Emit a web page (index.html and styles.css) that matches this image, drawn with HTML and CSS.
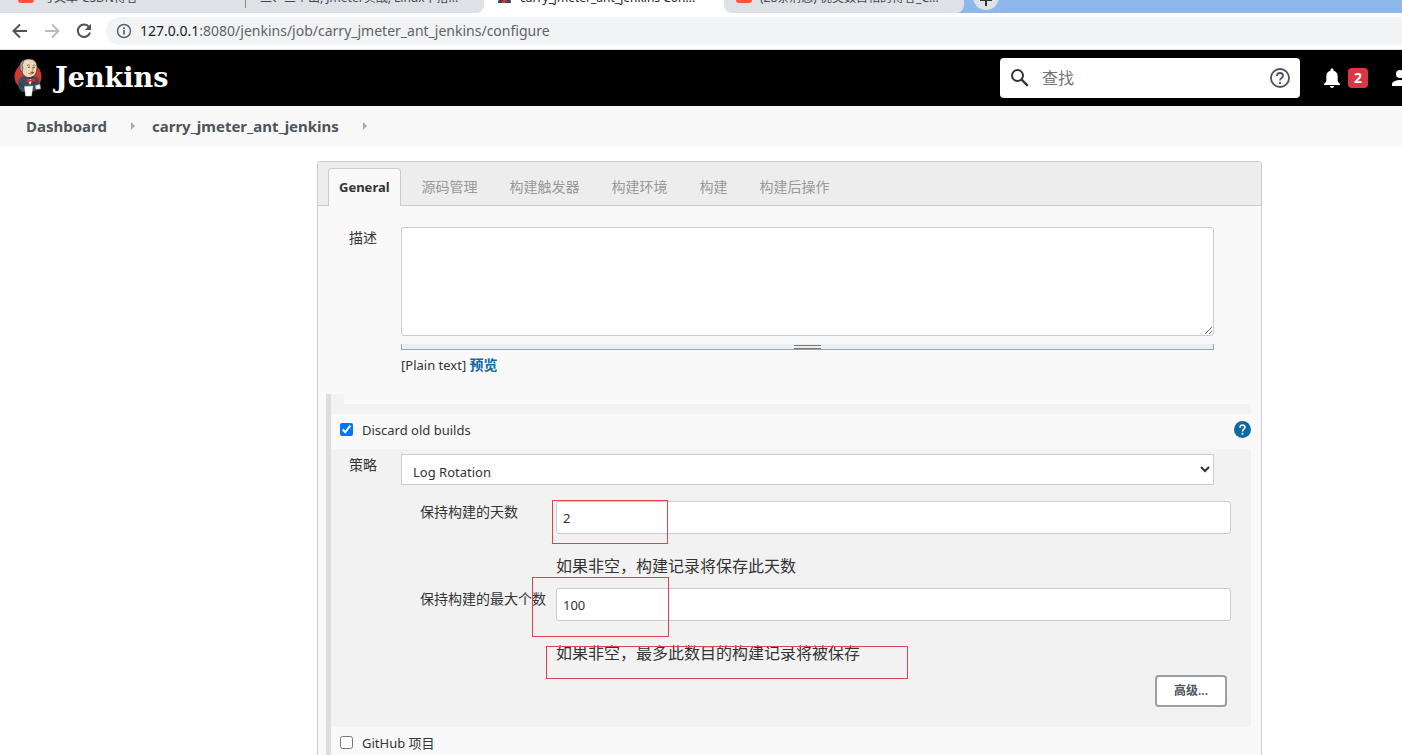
FILE: index.html
```html
<!DOCTYPE html>
<html lang="zh-CN">
<head>
<meta charset="utf-8">
<title>carry_jmeter_ant_jenkins Config [Jenkins]</title>
<link rel="stylesheet" href="styles.css">
</head>
<body>
<div class="browser">
  <div class="tab-strip">
    <div class="tab tab-first"><span class="tab-icon"></span><span class="tab-title">写文章-CSDN博客</span></div>
    <div class="tab tab-last"><span class="tab-title tab-title-plain">二、三个山, Jmeter实战, Linux下搭...</span></div>
    <div class="tab tab-active">
      <svg class="tab-butler" viewBox="0 0 16 16" aria-hidden="true"><path d="M2 16c0-4 2-6 5-7l4 1c3 1 4 3 4 6z" fill="#39434d"/><path d="M7 11l4 3-2 2H6z" fill="#d33833"/><circle cx="8" cy="6" r="4" fill="#f0d6b7"/></svg>
      <span class="tab-title">carry_jmeter_ant_jenkins Con...</span>
    </div>
    <div class="tab tab-only"><span class="tab-icon"></span><span class="tab-title">(28条消息) 优美数目相的博客_C...</span></div>
    <button class="new-tab" type="button" aria-label="New tab"><svg viewBox="0 0 12 12"><path d="M6 0v12M0 6h12" stroke="#333" stroke-width="2"/></svg></button>
  </div>
  <div class="toolbar">
    <button class="nav-button" type="button" aria-label="Back"><svg viewBox="0 0 16 16"><path d="M15 8H2M8 1.500L1.500 8L8 14.500" fill="none" stroke="#50545a" stroke-width="2"/></svg></button>
    <button class="nav-button" type="button" aria-label="Forward"><svg viewBox="0 0 16 16"><path d="M1 8h13M8 1.500L14.500 8L8 14.500" fill="none" stroke="#b9bbbe" stroke-width="2"/></svg></button>
    <button class="nav-button" type="button" aria-label="Reload"><svg viewBox="0 0 16 16"><path d="M13.300 4.500A6.200 6.200 0 1 0 14 9.500" fill="none" stroke="#50545a" stroke-width="2"/><path d="M15 0.800V7H8.800z" fill="#50545a"/></svg></button>
    <div class="address">
      <svg class="info" viewBox="0 0 16 16" aria-hidden="true"><circle cx="8" cy="8" r="6.500" fill="none" stroke="#5f6368" stroke-width="1.500"/><path d="M7.100 7h1.800v4.500H7.100zM7.100 4.200h1.800v1.700H7.100z" fill="#5f6368"/></svg>
      <span class="url"><b>127.0.0.1</b>:8080/jenkins/job/carry_jmeter_ant_jenkins/configure</span>
    </div>
  </div>
</div>

<header class="header">
  <a class="brand" href="#">
    <svg class="butler" viewBox="0 0 28 40" aria-hidden="true">
      <ellipse cx="14" cy="18.500" rx="13.500" ry="13.500" fill="#d33833"/>
      <path d="M6 20c-2 2-2.500 7-1 10 1 2.500 2 3 4 4l12-2c3-1 4-3 4.500-5l-1-7-6-2H9z" fill="#335061"/>
      <path d="M15 20l7-1 2 9-3 5h-6z" fill="#39474f"/>
      <path d="M13 21l3 6 3-6z" fill="#f4f4f4"/>
      <path d="M6.500 8C7.500 2.500 11 1 15 1c5 0 8 3 8 8 0 6-2 9.500-7 10.500-4 .5-7-2-8-5.500z" fill="#f0d6b7" stroke="#231f20" stroke-width=".7"/>
      <path d="M6.500 13C5 8 6 3.500 10 2c-1 2-1 4-2 5l1 3-1 4z" fill="#a7a39b" stroke="#453d38" stroke-width=".6"/>
      <path d="M13 7.500q2-1.500 3 0M18.500 7.500q2-1.300 3 0M18 9q2 2 .5 3.500M14.500 15.500q3 1.500 5.500-.8" fill="none" stroke="#6d4b3b" stroke-width=".7"/>
      <circle cx="15" cy="9.300" r=".7" fill="#231f20"/><circle cx="20" cy="9.300" r=".7" fill="#231f20"/>
      <path d="M16 14q2.500-1.300 4.500.2l-2.500 1z" fill="#6d4b3b"/>
      <path d="M11.500 20l5 2 4.500-2.500 1 4.500-5.500-1-4 2z" fill="#d33833" stroke="#7c1d1b" stroke-width=".5"/>
      <path d="M10.500 28.500l8.500-.5L17.500 38h-6z" fill="#fff" stroke="#ccd0d2" stroke-width=".5"/>
      <path d="M21 27.500l5-1.500.8 5-5 .5z" fill="#eee" stroke="#6d6b6d" stroke-width=".5"/>
      <path d="M6 25l4 5" stroke="#203541" stroke-width="1"/>
    </svg>
    <span>Jenkins</span>
  </a>
  <div class="header-right">
    <label class="search">
      <svg class="search-icon" viewBox="0 0 20 20" aria-hidden="true"><circle cx="7.500" cy="7.500" r="5.500" fill="none" stroke="#333" stroke-width="2"/><path d="M11.500 11.500l6.300 6.300" stroke="#333" stroke-width="2.400"/></svg>
      <input type="search" placeholder="查找" aria-label="查找">
      <svg class="search-help" viewBox="0 0 20 20" aria-hidden="true"><circle cx="10" cy="10" r="9" fill="none" stroke="#4d545d" stroke-width="1.800"/><path d="M7 8c0-1.800 1.200-3 3-3s3 1.200 3 2.800c0 2-3 2.300-3 4.700" fill="none" stroke="#4d545d" stroke-width="1.800"/><path d="M9 14h2v2H9z" fill="#4d545d"/></svg>
    </label>
    <a class="alerts" href="#" aria-label="2 notifications">
      <svg viewBox="0 0 16 20" aria-hidden="true"><path d="M8 0.500c.9 0 1.500.6 1.500 1.500v.7c2.800.7 4.200 3 4.200 5.800v5L16 16v1H0v-1l2.300-2.500v-5c0-2.800 1.400-5.100 4.200-5.800V2c0-.9.600-1.500 1.500-1.500zM6 18h4c0 1.100-.9 2-2 2s-2-.9-2-2z" fill="#fff"/></svg>
      <span class="badge">2</span>
    </a>
    <a class="user" href="#" aria-label="User"><svg viewBox="0 0 16 16" aria-hidden="true"><circle cx="8" cy="4" r="4" fill="#fff"/><path d="M0 16v-2c0-2.700 5.300-4 8-4s8 1.300 8 4v2z" fill="#fff"/></svg></a>
  </div>
</header>

<nav class="breadcrumbs">
  <a href="#">Dashboard</a><i class="arrow"></i><a href="#">carry_jmeter_ant_jenkins</a><i class="arrow"></i>
</nav>

<main class="page">
  <form class="config">
    <div class="config-tabs">
      <a class="config-tab config-tab-active" href="#">General</a>
      <a class="config-tab" href="#">源码管理</a>
      <a class="config-tab" href="#">构建触发器</a>
      <a class="config-tab" href="#">构建环境</a>
      <a class="config-tab" href="#">构建</a>
      <a class="config-tab" href="#">构建后操作</a>
    </div>

    <div class="row description">
      <label for="description">描述</label>
      <div class="control">
        <textarea id="description"></textarea>
        <div class="resizer"><span></span></div>
        <p class="preview">[Plain text] <a href="#">预览</a></p>
      </div>
    </div>

    <section class="options">
      <div class="spacer"></div>
      <div class="option">
        <input type="checkbox" id="discard" checked><label for="discard">Discard old builds</label>
        <a class="help" href="#" aria-label="Help"><svg viewBox="0 0 16 16" aria-hidden="true"><circle cx="8" cy="8" r="8" fill="#0b6aa2"/><path d="M5.700 6.300C5.700 4.700 6.700 3.700 8 3.700s2.300.9 2.300 2.200C10.300 7.500 8 7.800 8 9.800" fill="none" stroke="#fff" stroke-width="1.500"/><path d="M7.200 11.200h1.600v1.600H7.200z" fill="#fff"/></svg></a>
      </div>
      <div class="option-body">
        <div class="row strategy">
          <label for="strategy">策略</label>
          <select id="strategy"><option>Log Rotation</option></select>
        </div>
        <div class="row limit">
          <label for="days">保持构建的天数</label>
          <div class="control">
            <input type="text" id="days" value="2">
            <p class="hint">如果非空，构建记录将保存此天数</p>
            <span class="mark mark-days"></span>
          </div>
        </div>
        <div class="row limit">
          <label for="builds">保持构建的最大个数</label>
          <div class="control">
            <input type="text" id="builds" value="100">
            <p class="hint">如果非空，最多此数目的构建记录将被保存</p>
            <span class="mark mark-builds"></span>
            <span class="mark mark-hint"></span>
          </div>
        </div>
        <div class="actions"><button type="button">高级...</button></div>
      </div>
      <div class="option">
        <input type="checkbox" id="github"><label for="github">GitHub 项目</label>
      </div>
    </section>
  </form>
</main>
</body>
</html>
```
FILE: styles.css
```css
* { box-sizing: border-box; }

html { overflow: hidden; }

body {
  margin: 0;
  background: #fff;
  color: #333;
  font: 14px/20px "Noto Sans", "Noto Sans CJK SC", sans-serif;
}

a { color: inherit; text-decoration: none; }
p { margin: 0; }
svg { display: block; }
button { font: inherit; cursor: pointer; }

/* Browser chrome */
.browser { border-bottom: 1px solid #dadce0; }

.tab-strip {
  display: flex;
  align-items: flex-end;
  height: 13px;
  overflow: hidden;
  background: linear-gradient(90deg, #dee1e6 0 470px, #fff 470px 740px, #8fb8ea 740px);
}

.tab {
  display: flex;
  align-items: center;
  gap: 8px;
  flex: 0 0 240px;
  min-width: 0;
  height: 34px;
  padding: 0 24px 0 12px;
  background: #dee1e6;
  color: #45484c;
  font-size: 12px;
}

.tab-first { flex-basis: 245px; padding-left: 18px; }
.tab-last { flex-basis: 239px; padding-left: 0; border-radius: 0 0 8px 0; }
.tab-active { background: #fff; color: #222; }
.tab-only { border-radius: 0 0 8px 8px; }

.tab-title { flex: 1; min-width: 0; overflow: hidden; white-space: nowrap; padding-top: 3px; }
.tab-title-plain { border-left: 1px solid #888; padding-left: 14px; }
.tab-icon { flex: none; width: 16px; height: 16px; border-radius: 3px; background: #fff; border: 4px solid #fc5531; margin-bottom: 2px; }
.tab-butler { flex: none; width: 16px; height: 16px; margin-bottom: 2px; }

.new-tab {
  display: flex;
  align-items: center;
  justify-content: center;
  width: 26px;
  height: 26px;
  margin: 0 0 3px 9px;
  padding: 0;
  border: 0;
  border-radius: 13px;
  background: #dee1e6;
}

.new-tab svg { width: 12px; height: 12px; margin-top: 6px; }

.toolbar {
  display: flex;
  align-items: center;
  gap: 16px;
  height: 36px;
  padding-left: 12px;
  background: #fff;
}

.nav-button { width: 16px; height: 16px; padding: 0; border: 0; background: none; }
.nav-button svg { width: 16px; height: 16px; }

.address {
  display: flex;
  align-items: center;
  gap: 8px;
  flex: 1;
  height: 28px;
  margin-left: -2px;
  padding-left: 10px;
  border-radius: 14px 0 0 14px;
  background: #f1f3f4;
}

.info { width: 16px; height: 16px; }
.url { color: #5f6368; font-size: 14px; white-space: nowrap; }
.url b { color: #202124; font-weight: 400; }

/* Jenkins header */
.header {
  display: flex;
  align-items: center;
  justify-content: space-between;
  height: 56px;
  padding-left: 14px;
  overflow: hidden;
  background: #000;
}

.brand {
  display: flex;
  align-items: center;
  gap: 13px;
  color: #fff;
  font: bold 27px/40px "DejaVu Serif", serif;
}

.butler { width: 28px; height: 40px; }
.header-right { display: flex; align-items: center; }

.search {
  display: flex;
  align-items: center;
  width: 300px;
  height: 40px;
  padding: 0 10px;
  border-radius: 4px;
  background: #fff;
}

.search-icon, .search-help { flex: none; width: 20px; height: 20px; }

.search input {
  flex: 1;
  min-width: 0;
  padding: 0 12px;
  border: 0;
  outline: 0;
  background: none;
  font: inherit;
  font-size: 16px;
}

.search input::placeholder { color: #757575; }

.alerts { display: flex; align-items: center; gap: 8px; margin: 0 24px; }
.alerts svg { width: 16px; height: 20px; }

.badge {
  width: 20px;
  height: 20px;
  border-radius: 4px;
  background: #dc3545;
  color: #fff;
  font-size: 14px;
  font-weight: 700;
  text-align: center;
}

.user { width: 10px; }
.user svg { width: 16px; height: 16px; }

.breadcrumbs {
  display: flex;
  align-items: center;
  height: 40px;
  padding-left: 26px;
  background: #f8f8f8;
  color: #4d545d;
  font-size: 15px;
  font-weight: 700;
}

.arrow {
  margin: 0 17px 0 24px;
  border: 4px solid transparent;
  border-left: 4px solid #aaa;
  border-right-width: 0;
}

/* Configuration form */
.page { padding: 15px 140px 0 317px; }

.config {
  border: 1px solid #ccc;
  border-radius: 3px 3px 0 0;
  background: #f9f9f9;
}

.config-tabs {
  display: flex;
  align-items: flex-end;
  height: 44px;
  padding-left: 10px;
  border-bottom: 1px solid #ccc;
  background: #ededed;
}

.config-tab {
  height: 37px;
  padding: 8px 10px 0;
  border: 1px solid transparent;
  border-bottom: 0;
  margin: 0 10px 0 0;
  color: #999;
}

.config-tab-active {
  height: 38px;
  margin: 0 10px -1px 0;
  border-color: #ccc;
  border-radius: 4px 4px 0 0;
  background: #f9f9f9;
  color: #333;
  font-size: 13px;
  font-weight: 700;
}

.row { display: grid; grid-template-columns: 52px 1fr; }
.row label { padding-top: 1px; }
.description { padding: 21px 47px 19px 31px; }

textarea {
  display: block;
  width: 100%;
  height: 109px;
  border: 1px solid #ccc;
  border-radius: 3px;
  outline: 0;
  resize: vertical;
}

.resizer {
  display: flex;
  justify-content: center;
  height: 6px;
  margin-top: 8px;
  border: 1px solid #98a5af;
  border-top: 0;
  background: #eceff1;
}

.resizer span { width: 27px; height: 4px; margin-top: 1px; border: 1px solid #777; border-width: 1px 0; }
.preview { padding-top: 5px; font-size: 13px; }
.preview a { color: #0b6aa2; font-weight: 700; font-size: 14px; }

.options {
  margin: 0 10px 0 8px;
  border-left: 5px solid #ddd;
}

.spacer {
  height: 20px;
  border-left: 13px solid #f2f2f2;
  background: linear-gradient(#f9f9f9 10px, #f2f2f2 10px);
}

.option { display: flex; align-items: center; height: 35px; padding: 0 0 5px 9px; font-size: 13px; }
.option input { width: 13px; height: 13px; margin: 0 9px 0 0; }
.option label { padding-top: 2px; }
.option .help { margin-left: auto; }
.help svg { width: 17px; height: 17px; }

.option-body { padding: 5px 0 20px; background: #f2f2f2; }
.strategy { padding: 0 37px 0 18px; }

select {
  width: 100%;
  height: 31px;
  padding: 4px 4px 0 7px;
  border: 1px solid #ccc;
  border-radius: 0;
  outline: 0;
  background: #fff;
  color: #333;
  font: 13px/18px "Noto Sans", sans-serif;
}

.limit { grid-template-columns: 136px 1fr; padding: 16px 20px 0 89px; }
.limit + .limit { padding-top: 12px; }
.control { position: relative; }

.control input {
  display: block;
  width: 100%;
  height: 33px;
  padding: 0 6px;
  border: 1px solid #ccc;
  border-radius: 3px;
  outline: 0;
  color: #333;
  font: inherit;
  font-size: 13px;
}

.hint { padding-top: 22px; font-size: 16px; }

/* Highlight boxes drawn over the fields */
.mark { position: absolute; border: 1px solid #e0434f; pointer-events: none; }
.mark-days { left: -4px; top: -1px; width: 116px; height: 44px; }
.mark-builds { left: -24px; top: -11px; width: 137px; height: 60px; }
.mark-hint { left: -10px; top: 58px; width: 362px; height: 33px; }

.actions { display: flex; justify-content: flex-end; padding: 12px 24px 0 0; }

.actions button {
  width: 72px;
  height: 32px;
  padding: 0;
  border: 2px solid #98a0a6;
  border-radius: 4px;
  background: #fff;
  color: #4d545d;
  font-size: 12px;
  font-weight: 600;
}
```
